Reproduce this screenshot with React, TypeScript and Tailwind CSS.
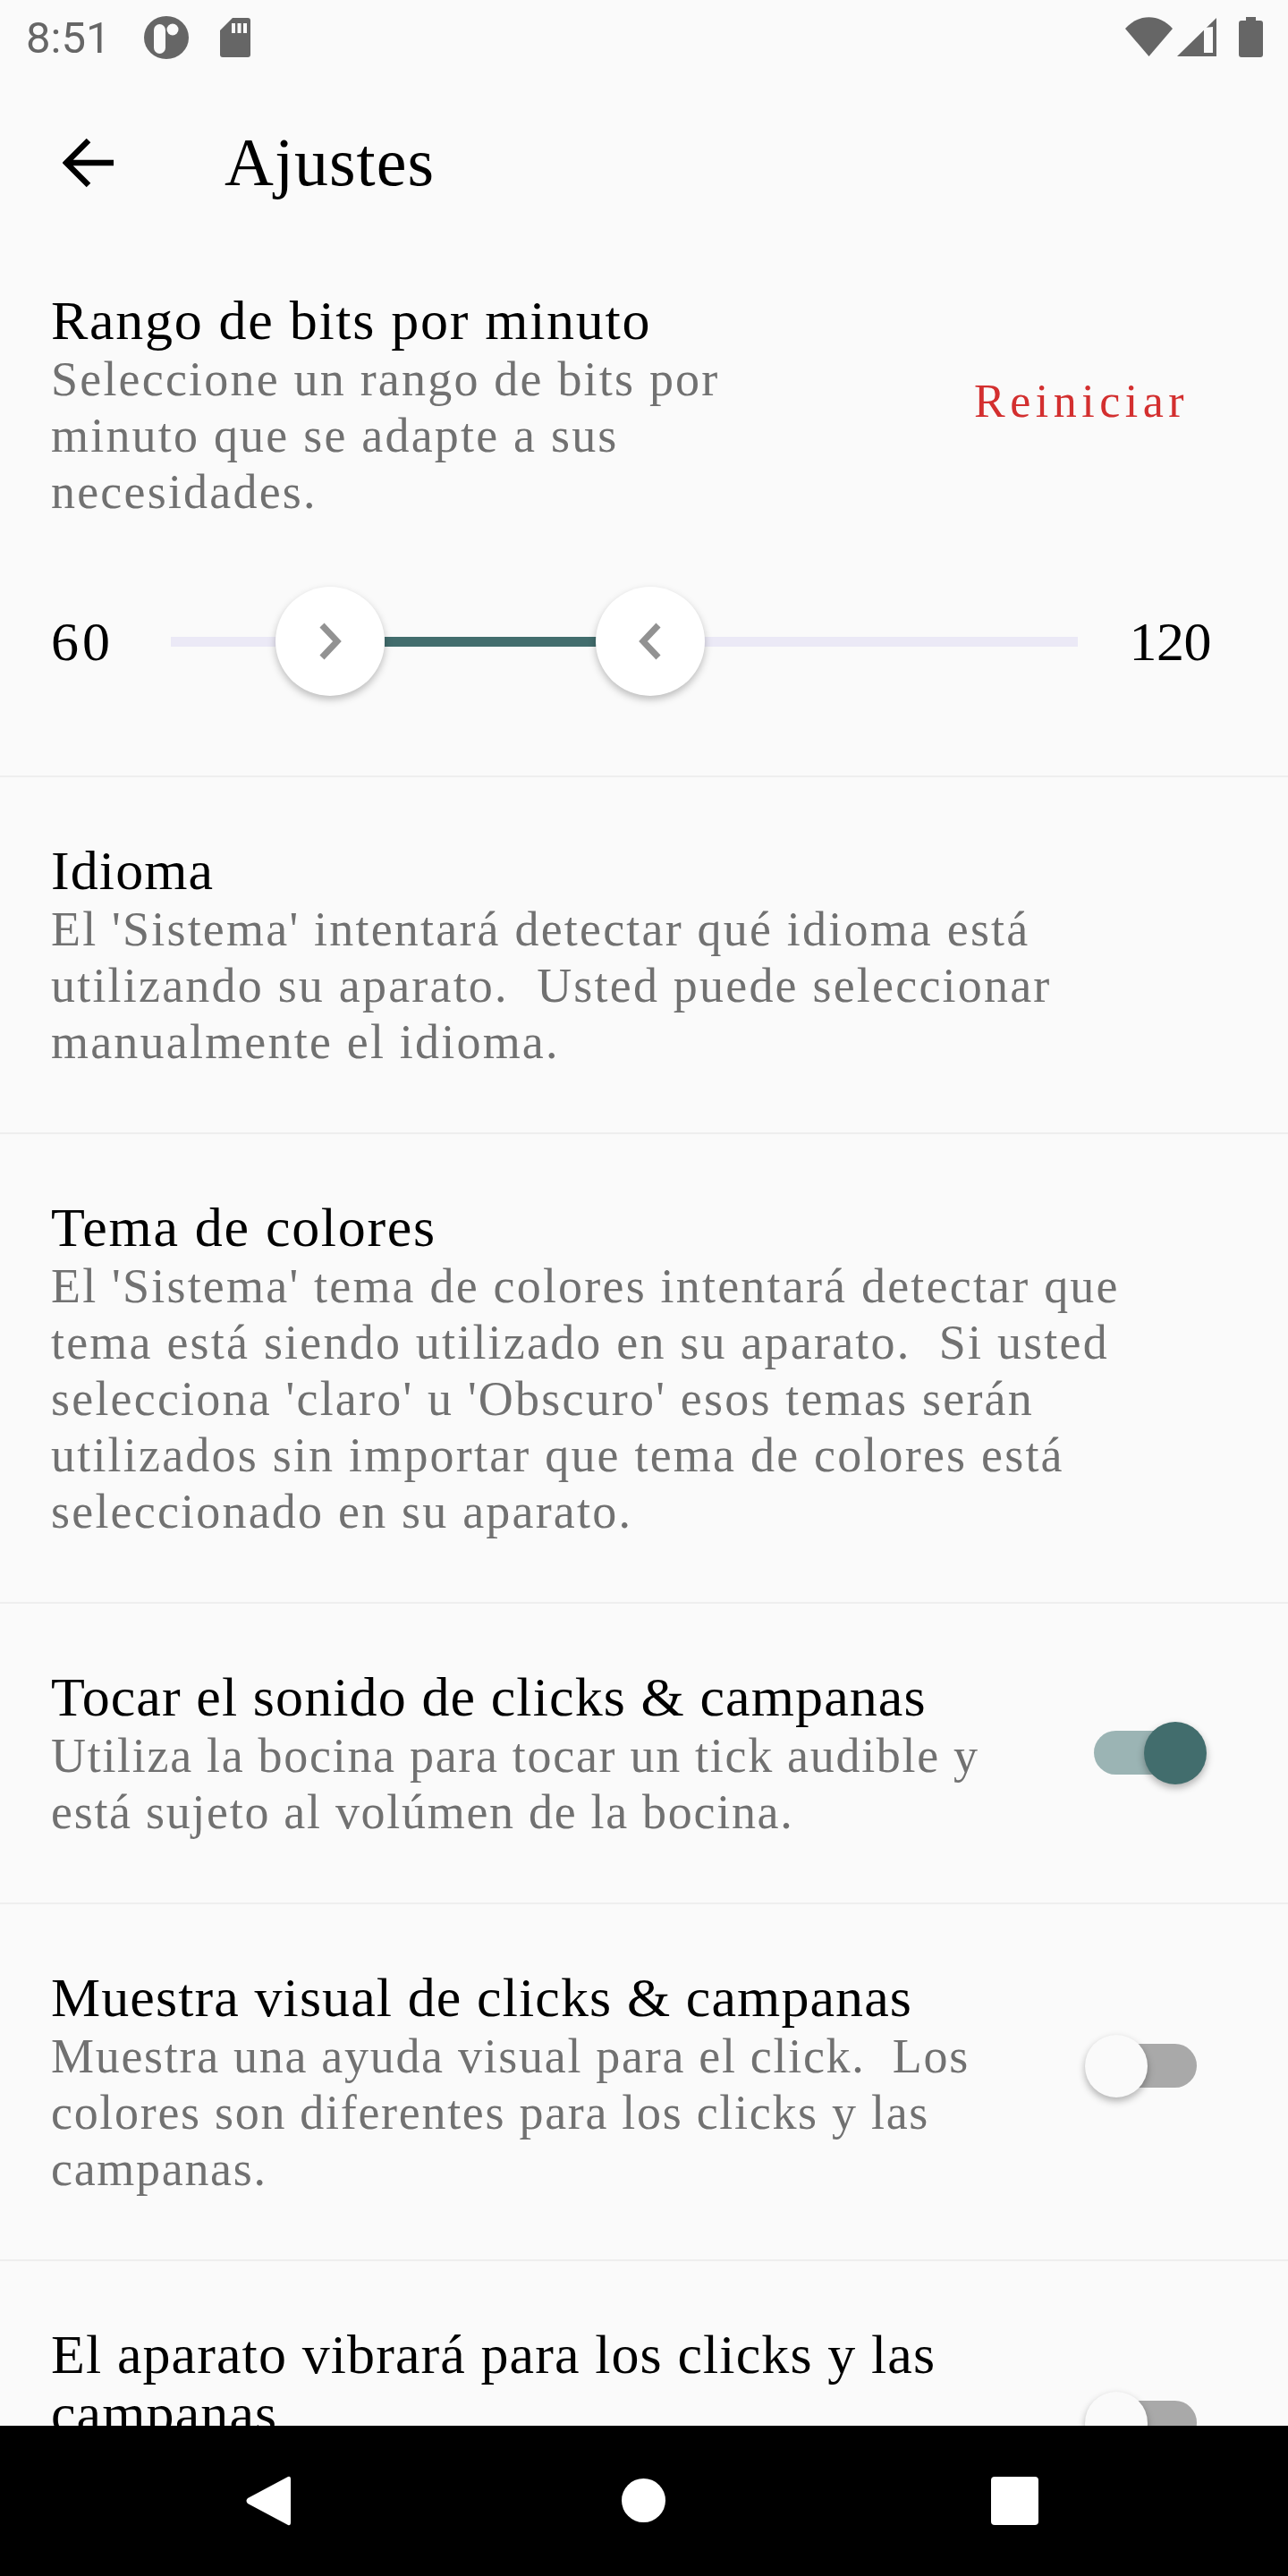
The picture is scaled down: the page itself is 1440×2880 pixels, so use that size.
import React from "react";

const serif = "font-['Liberation_Serif',serif]";

function Title({ children, wide }: { children: React.ReactNode; wide?: boolean }) {
  return (
    <div className={`${serif} text-[62px] leading-[66px] text-black whitespace-nowrap ${wide ? "tracking-[1.7px]" : "tracking-[1.1px]"}`}>
      {children}
    </div>
  );
}

function Desc({ lines, tight }: { lines: string[]; tight?: boolean }) {
  return (
    <div className={`${serif} text-[54px] leading-[63px] text-[#717171] whitespace-pre translate-y-[2px] ${tight ? "tracking-[1.7px]" : "tracking-[2.2px]"}`}>
      {lines.map((l) => (
        <div key={l}>{l}</div>
      ))}
    </div>
  );
}

function Toggle({ on, top }: { on?: boolean; top: string }) {
  return (
    <div className={`absolute left-[1223px] w-[115px] h-[49px] rounded-full ${top} ${on ? "bg-[#9bb4b4]" : "bg-[#a9a9a9]"}`}>
      <div
        className={`absolute top-[-10px] w-[70px] h-[70px] rounded-full shadow-[0_4px_8px_rgba(0,0,0,0.3)] ${
          on ? "left-[56px] bg-[#426d6d]" : "left-[-10px] bg-[#fafafa]"
        }`}
      />
    </div>
  );
}

function Row({ title, lines, wide, tight, children }: { title: string; lines: string[]; wide?: boolean; tight?: boolean; children?: React.ReactNode }) {
  return (
    <section className="relative border-t-[2px] border-[#eeeeee] pt-[71px] pb-[71px] pl-[57px]">
      <Title wide={wide}>{title}</Title>
      <Desc lines={lines} tight={tight} />
      {children}
    </section>
  );
}

function Thumb({ dir }: { dir: "l" | "r" }) {
  return (
    <div className="w-[122px] h-[122px] rounded-full bg-white shadow-[0_4px_9px_rgba(0,0,0,0.25)] flex items-center justify-center shrink-0">
      <svg width="26" height="42" viewBox="0 0 26 42">
        {dir === "r" ? (
          <path d="M4 3 L21 21 L4 39" fill="none" stroke="#929292" strokeWidth="7" />
        ) : (
          <path d="M22 3 L5 21 L22 39" fill="none" stroke="#929292" strokeWidth="7" />
        )}
      </svg>
    </div>
  );
}

export default function App() {
  return (
    <div className="w-[1440px] h-[2880px] flex flex-col bg-[#fafafa] overflow-hidden">
      <div className="flex-1 min-h-0 overflow-hidden">
        {/* status bar */}
        <div className="h-[84px] flex items-start relative">
          <span className="ml-[29px] mt-[16px] font-['Roboto',sans-serif] text-[49px] leading-[54px] text-[#666666]">8:51</span>
          <svg className="ml-[38px] mt-[18px]" width="50" height="48" viewBox="0 0 50 48">
            <ellipse cx="25" cy="24" rx="25" ry="24" fill="#666" />
            <rect x="11" y="9" width="13" height="33" rx="6.5" fill="#fafafa" />
            <circle cx="32" cy="15" r="6.5" fill="#fafafa" />
          </svg>
          <svg className="ml-[35px] mt-[20px]" width="34" height="44" viewBox="0 0 34 44">
            <path d="M14 0 H31 a3 3 0 0 1 3 3 V41 a3 3 0 0 1 -3 3 H3 a3 3 0 0 1 -3 -3 V14 Z" fill="#666" />
            <rect x="13" y="6" width="4" height="11" fill="#fafafa" />
            <rect x="19.500" y="6" width="4" height="11" fill="#fafafa" />
            <rect x="26" y="6" width="4" height="11" fill="#fafafa" />
          </svg>
          <div className="ml-auto flex items-start mt-[19px] mr-[28px]">
            <svg width="53" height="44" viewBox="0 0 53 44">
              <path d="M0 13 C15 -4 38 -4 53 13 L26.500 44 Z" fill="#666" />
            </svg>
            <svg className="ml-[5px] mt-[1px]" width="44" height="43" viewBox="0 0 44 43">
              <path d="M44 0 V43 H0 Z" fill="#666" />
              <path d="M30 11 L40 10 V39 H30 Z" fill="#fafafa" />
            </svg>
            <svg className="ml-[25px]" width="27" height="45" viewBox="0 0 27 45">
              <path d="M8 0 H19 V4 H24 a3 3 0 0 1 3 3 V42 a3 3 0 0 1 -3 3 H3 a3 3 0 0 1 -3 -3 V7 a3 3 0 0 1 3 -3 H8 Z" fill="#666" />
            </svg>
          </div>
        </div>

        {/* app bar */}
        <header className="h-[154px] flex items-start">
          <svg className="ml-[70px] mt-[70px] shrink-0" width="57" height="56" viewBox="0 0 57 56">
            <path d="M57 28 H5 M29 3 L4 28 L29 53" fill="none" stroke="#000" strokeWidth="6.500" />
          </svg>
          <h1 className={`${serif} ml-[124px] mt-[57px] text-[76px] leading-[80px] tracking-[1px] text-black font-normal`}>Ajustes</h1>
        </header>

        {/* BPM range */}
        <section className="relative pt-[87px] pl-[57px] h-[629px]">
          <Title wide>Rango de bits por minuto</Title>
          <Desc lines={["Seleccione un rango de bits por", "minuto que se adapte a sus", "necesidades."]} />
          <button className={`${serif} absolute left-[1089px] top-[178px] text-[52px] leading-[66px] tracking-[5.500px] text-[#d32f2f]`}>Reiniciar</button>
          <div className="flex items-center h-[122px] mt-[76px] pr-[86px]">
            <span className={`${serif} w-[134px] shrink-0 text-[62px] leading-[66px] tracking-[4px] text-black`}>60</span>
            <div className="relative w-[1014px] h-[122px] shrink-0 flex items-center">
              <div className="h-[11px] w-full bg-[#ebe9f6]" />
              <div className="absolute left-[239px] w-[238px] top-[56px] h-[11px] bg-[#426d6d]" />
              <div className="absolute left-[117px] top-0"><Thumb dir="r" /></div>
              <div className="absolute left-[475px] top-0"><Thumb dir="l" /></div>
            </div>
            <span className={`${serif} ml-auto text-[62px] leading-[66px] tracking-[-0.5px] text-black`}>120</span>
          </div>
        </section>

        <Row
          title="Idioma"
          lines={["El 'Sistema' intentará detectar qué idioma está", "utilizando su aparato.  Usted puede seleccionar", "manualmente el idioma."]}
        />
        <Row
          wide
          title="Tema de colores"
          lines={[
            "El 'Sistema' tema de colores intentará detectar que",
            "tema está siendo utilizado en su aparato.  Si usted",
            "selecciona 'claro' u 'Obscuro' esos temas serán",
            "utilizados sin importar que tema de colores está",
            "seleccionado en su aparato.",
          ]}
        />
        <Row
          tight
          title="Tocar el sonido de clicks & campanas"
          lines={["Utiliza la bocina para tocar un tick audible y", "está sujeto al volúmen de la bocina."]}
        >
          <Toggle on top="top-[142px]" />
        </Row>
        <Row
          tight
          title="Muestra visual de clicks & campanas"
          lines={["Muestra una ayuda visual para el click.  Los", "colores son diferentes para los clicks y las", "campanas."]}
        >
          <Toggle top="top-[156px]" />
        </Row>
        <Row title="El aparato vibrará para los clicks y las" lines={[]}>
          <div className={`${serif} text-[62px] leading-[66px] tracking-[1.1px] text-black`}>campanas</div>
          <Toggle top="top-[156px]" />
        </Row>
      </div>

      {/* nav bar */}
      <nav className="h-[168px] shrink-0 bg-black flex items-start pl-[275px] pt-[56px]">
        <svg width="50" height="56" viewBox="0 0 50 56">
          <path d="M47 1 Q50 0 50 4 V52 Q50 56 47 55 L2 31 Q-1 28 2 25 Z" fill="#fff" />
        </svg>
        <div className="ml-[370px] mt-[3px] w-[49px] h-[49px] rounded-full bg-white" />
        <div className="ml-[364px] mt-[1px] w-[53px] h-[54px] rounded-[4px] bg-white" />
      </nav>
    </div>
  );
}
